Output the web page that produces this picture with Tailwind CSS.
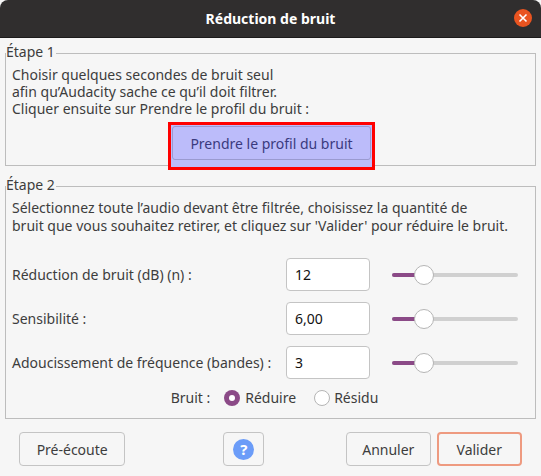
<!doctype html>
<html><head><meta charset="utf-8"><script src="https://cdn.jsdelivr.net/npm/@tailwindcss/browser@4"></script></head>
<body class="bg-[#f6f6f6]">
<div class="w-[541px] h-[476px] overflow-hidden flex flex-col font-['Noto_Sans',sans-serif] text-[14px] text-[#3d3d3d] bg-[#f6f6f6]">
  <div class="relative h-[38px] shrink-0 bg-[#302e2e] rounded-t-[8px] flex items-center justify-center border-b border-[#1c1b1b]">
    <span class="font-bold text-white text-[14px] -mt-[1px]">Réduction de bruit</span>
    <span class="absolute right-[9px] top-[9px] w-[18px] h-[18px] rounded-full bg-[#e95420] flex items-center justify-center">
      <svg width="10" height="10" viewBox="0 0 10 10"><path d="M1.5 1.5l7 7M8.5 1.5l-7 7" stroke="#fff" stroke-width="1.6"/></svg>
    </span>
  </div>
  <div class="relative mt-[15px] mx-[5px] h-[113px] border border-[#bdbdbd] shrink-0">
    <span class="absolute -top-[12px] left-0 bg-[#f6f6f6] pr-[1px] leading-[20px]">Étape 1</span>
    <div class="pl-[6px] pt-[12px] leading-[17px]">
      <p>Choisir quelques secondes de bruit seul</p>
      <p>afin qu’Audacity sache ce qu’il doit filtrer.</p>
      <p>Cliquer ensuite sur Prendre le profil du bruit :</p>
    </div>
    <div class="absolute left-[162px] top-[68px] w-[207px] h-[48px] border-[3px] border-[#ff0000] bg-[#bcbcfa]">
      <div class="ml-[1px] mt-[1px] w-[199px] h-[34px] border border-[#9a9ad0] rounded-[3px] flex items-center justify-center text-[#3a3a7e]">Prendre le profil du bruit</div>
    </div>
  </div>
  <div class="relative mt-[20px] mx-[5px] h-[233px] border border-[#bdbdbd] shrink-0 flex flex-col">
    <span class="absolute -top-[12px] left-0 bg-[#f6f6f6] pr-[1px] leading-[20px]">Étape 2</span>
    <div class="pl-[6px] pt-[12px] leading-[18px]">
      <p>Sélectionnez toute l’audio devant être filtrée, choisissez la quantité de</p>
      <p>bruit que vous souhaitez retirer, et cliquez sur 'Valider' pour réduire le bruit.</p>
    </div>
    <div class="flex flex-col gap-[11px] mt-[23px] pl-[6px]">
      <div class="flex items-center h-[33px]">
        <span class="w-[274px]">Réduction de bruit (dB) (n) :</span>
        <div class="w-[84px] h-[33px] bg-white border border-[#c4c4c4] rounded-[4px] flex items-center pl-[8px] text-[#111]">12</div>
        <div class="relative ml-[22px] w-[126px] h-[4px] rounded-full bg-[#d0d0d0]"><div class="w-[30px] h-full rounded-l-full bg-[#8b4a87]"></div><div class="absolute left-[22px] -top-[8px] w-[20px] h-[20px] rounded-full bg-white border border-[#b5b5b5]"></div></div>
      </div>
      <div class="flex items-center h-[33px]">
        <span class="w-[274px]">Sensibilité :</span>
        <div class="w-[84px] h-[33px] bg-white border border-[#c4c4c4] rounded-[4px] flex items-center pl-[8px] text-[#111]">6,00</div>
        <div class="relative ml-[22px] w-[126px] h-[4px] rounded-full bg-[#d0d0d0]"><div class="w-[30px] h-full rounded-l-full bg-[#8b4a87]"></div><div class="absolute left-[22px] -top-[8px] w-[20px] h-[20px] rounded-full bg-white border border-[#b5b5b5]"></div></div>
      </div>
      <div class="flex items-center h-[33px]">
        <span class="w-[274px]">Adoucissement de fréquence (bandes) :</span>
        <div class="w-[84px] h-[33px] bg-white border border-[#c4c4c4] rounded-[4px] flex items-center pl-[8px] text-[#111]">3</div>
        <div class="relative ml-[22px] w-[126px] h-[4px] rounded-full bg-[#d0d0d0]"><div class="w-[30px] h-full rounded-l-full bg-[#8b4a87]"></div><div class="absolute left-[22px] -top-[8px] w-[20px] h-[20px] rounded-full bg-white border border-[#b5b5b5]"></div></div>
      </div>
    </div>
    <div class="flex items-center justify-center mt-[8px] ml-[8px]">
      <span>Bruit :</span>
      <span class="ml-[14px] w-[16px] h-[16px] rounded-full bg-[#8b4a87] flex items-center justify-center"><span class="w-[6px] h-[6px] rounded-full bg-white"></span></span>
      <span class="ml-[5px]">Réduire</span>
      <span class="ml-[18px] w-[16px] h-[16px] rounded-full bg-white border border-[#b5b5b5]"></span>
      <span class="ml-[4px]">Résidu</span>
    </div>
  </div>
  <div class="flex items-center mt-[13px] px-[19px]">
    <div class="w-[107px] h-[34px] border border-[#c4c4c4] rounded-[4px] flex items-center justify-center">Pré-écoute</div>
    <div class="ml-[98px] w-[41px] h-[34px] border border-[#c4c4c4] rounded-[4px] flex items-center justify-center">
      <span class="w-[21px] h-[21px] rounded-full bg-[#6b9cf8] flex items-center justify-center text-white font-bold text-[15px]">?</span>
    </div>
    <div class="ml-[82px] w-[85px] h-[34px] border border-[#c4c4c4] rounded-[4px] flex items-center justify-center">Annuler</div>
    <div class="ml-[6px] w-[86px] h-[34px] border-2 border-[#ee9a80] rounded-[4px] flex items-center justify-center">Valider</div>
  </div>
</div>
</body></html>
